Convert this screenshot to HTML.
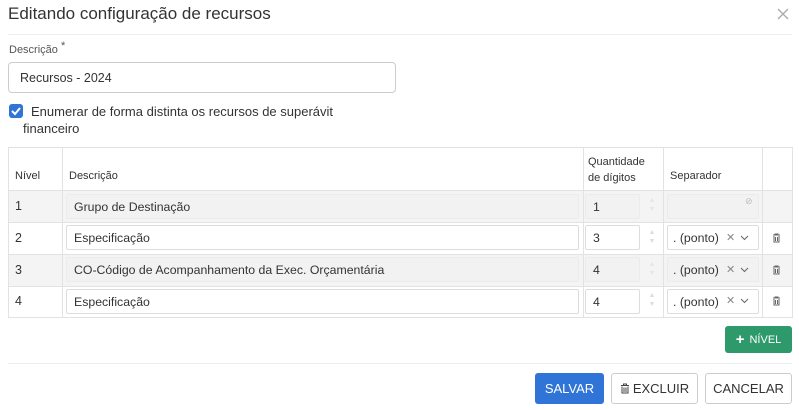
<!DOCTYPE html>
<html><head><meta charset="utf-8"><style>
*{box-sizing:border-box;margin:0;padding:0}
body{width:799px;height:410px;background:#fff;font-family:"Liberation Sans",sans-serif;color:#333;position:relative;overflow:hidden;font-size:13px}
.a{position:absolute}
.inp{position:absolute;border:1px solid #ddd;background:#fff;border-radius:2px;padding-left:7px;display:flex;align-items:center;font-size:12.3px;color:#333}
.dis{background:#f2f2f2;border-color:#ebebeb}
.hl{position:absolute;background:#e2e2e2}
.btn{position:absolute;border-radius:3px;display:flex;align-items:center;justify-content:center;font-size:13px}
.spin{position:absolute;width:8px;height:20px;color:#ddd;font-size:7px;line-height:9px;text-align:center}
</style></head><body>
<div class="a" style="left:8px;top:4px;font-size:17px;color:#333">Editando configuração de recursos</div>
<svg class="a" style="left:777px;top:8px" width="12" height="12"><path d="M1 1L11 11M11 1L1 11" stroke="#aaa" stroke-width="1.3"/></svg>
<div class="hl" style="left:8px;top:34px;width:784px;height:1px;background:#eee"></div>
<div class="a" style="left:9px;top:44px;font-size:11px;color:#555">Descrição <span style="position:relative;top:-4px">*</span></div>
<div class="inp" style="left:8px;top:62px;width:388px;height:31px;border-color:#ccc;border-radius:4px;padding-left:11px;font-size:12.5px">Recursos - 2024</div>
<svg class="a" style="left:9px;top:104px" width="14" height="14"><rect width="14" height="14" rx="3" fill="#2f74d6"/><path d="M3 7L6 10L11 4" stroke="#fff" stroke-width="2" fill="none"/></svg>
<div class="a" style="left:31px;top:103px;font-size:13px;line-height:18px">Enumerar de forma distinta os recursos de superávit</div>
<div class="a" style="left:23px;top:120px;font-size:13px;line-height:18px">financeiro</div>

<div class="a" style="left:8px;top:147px;width:785px;height:171px;border:1px solid #e2e2e2"></div>
<div class="a" style="left:9px;top:190px;width:783px;height:32px;background:#f4f4f4"></div>
<div class="a" style="left:9px;top:254px;width:783px;height:32px;background:#f4f4f4"></div>
<div class="hl" style="left:8px;top:190px;width:785px;height:1px"></div>
<div class="hl" style="left:8px;top:222px;width:785px;height:1px"></div>
<div class="hl" style="left:8px;top:254px;width:785px;height:1px"></div>
<div class="hl" style="left:8px;top:286px;width:785px;height:1px"></div>
<div class="hl" style="left:62px;top:147px;width:1px;height:171px"></div>
<div class="hl" style="left:583px;top:147px;width:1px;height:171px"></div>
<div class="hl" style="left:663px;top:147px;width:1px;height:171px"></div>
<div class="hl" style="left:762px;top:147px;width:1px;height:171px"></div>

<div class="a" style="left:15px;top:170px;font-size:11px">Nível</div>
<div class="a" style="left:69px;top:170px;font-size:11px">Descrição</div>
<div class="a" style="left:588px;top:154px;font-size:11px;line-height:16px">Quantidade<br>de dígitos</div>
<div class="a" style="left:670px;top:170px;font-size:11px">Separador</div>

<div class="a" style="left:15px;top:199px;font-size:12.5px">1</div>
<div class="a" style="left:15px;top:231px;font-size:12.5px">2</div>
<div class="a" style="left:15px;top:263px;font-size:12.5px">3</div>
<div class="a" style="left:15px;top:294px;font-size:12.5px">4</div>

<div class="inp dis" style="left:66px;top:194px;width:513px;height:25px">Grupo de Destinação</div>
<div class="inp" style="left:66px;top:225px;width:513px;height:25px">Especificação</div>
<div class="inp dis" style="left:66px;top:257px;width:513px;height:25px">CO-Código de Acompanhamento da Exec. Orçamentária</div>
<div class="inp" style="left:66px;top:289px;width:513px;height:25px">Especificação</div>

<div class="inp dis" style="left:585px;top:194px;width:55px;height:25px">1</div>
<div class="inp" style="left:585px;top:225px;width:55px;height:25px">3</div>
<div class="inp dis" style="left:585px;top:257px;width:55px;height:25px">4</div>
<div class="inp" style="left:585px;top:289px;width:55px;height:25px">4</div>
<div class="spin" style="left:648px;top:196px;color:#e6e6e6">▲<br>▼</div>
<div class="spin" style="left:648px;top:228px">▲<br>▼</div>
<div class="spin" style="left:648px;top:260px;color:#e6e6e6">▲<br>▼</div>
<div class="spin" style="left:648px;top:291px">▲<br>▼</div>

<div class="inp dis" style="left:667px;top:194px;width:92px;height:25px"></div>
<div class="a" style="left:745px;top:196px;font-size:9px;color:#bbb">⊘</div>
<div class="inp" style="left:667px;top:225px;width:92px;height:25px;padding-left:5px">. (ponto)</div>
<div class="inp dis" style="left:667px;top:257px;width:92px;height:25px;padding-left:5px">. (ponto)</div>
<div class="inp" style="left:667px;top:289px;width:92px;height:25px;padding-left:5px">. (ponto)</div>
<div class="a" style="left:726px;top:231px;font-size:11px;color:#888">✕</div>
<div class="a" style="left:726px;top:263px;font-size:11px;color:#888">✕</div>
<div class="a" style="left:726px;top:294px;font-size:11px;color:#888">✕</div>
<svg class="a" style="left:740px;top:235px" width="9" height="6"><path d="M1 1L4.5 4.5L8 1" stroke="#666" fill="none"/></svg>
<svg class="a" style="left:740px;top:267px" width="9" height="6"><path d="M1 1L4.5 4.5L8 1" stroke="#666" fill="none"/></svg>
<svg class="a" style="left:740px;top:298px" width="9" height="6"><path d="M1 1L4.5 4.5L8 1" stroke="#666" fill="none"/></svg>
<svg class="a" style="left:772px;top:233px" width="9" height="10"><path d="M1 2H8M3 2V1H6V2M2 3V9H7V3M3.5 4V8M5.5 4V8" stroke="#666" fill="none"/></svg>
<svg class="a" style="left:772px;top:265px" width="9" height="10"><path d="M1 2H8M3 2V1H6V2M2 3V9H7V3M3.5 4V8M5.5 4V8" stroke="#666" fill="none"/></svg>
<svg class="a" style="left:772px;top:296px" width="9" height="10"><path d="M1 2H8M3 2V1H6V2M2 3V9H7V3M3.5 4V8M5.5 4V8" stroke="#666" fill="none"/></svg>

<div class="btn" style="left:725px;top:326px;width:67px;height:27px;background:#2e9a6c;color:#fff;font-size:11px"><b style="font-size:15px;margin-right:5px">+</b>NÍVEL</div>
<div class="hl" style="left:8px;top:363px;width:784px;height:1px;background:#eee"></div>
<div class="btn" style="left:535px;top:373px;width:69px;height:31px;background:#2f74d6;color:#fff">SALVAR</div>
<div class="btn" style="left:611px;top:373px;width:87px;height:31px;border:1px solid #ccc;color:#333"><svg width="10" height="11" style="margin-right:3px"><path d="M1 2.5H9M3.5 2.5V1H6.5V2.5M2 3.5V10H8V3.5M4 4.5V9M6 4.5V9" stroke="#444" fill="none"/></svg>EXCLUIR</div>
<div class="btn" style="left:705px;top:373px;width:87px;height:31px;border:1px solid #ccc;color:#333">CANCELAR</div>
</body></html>
